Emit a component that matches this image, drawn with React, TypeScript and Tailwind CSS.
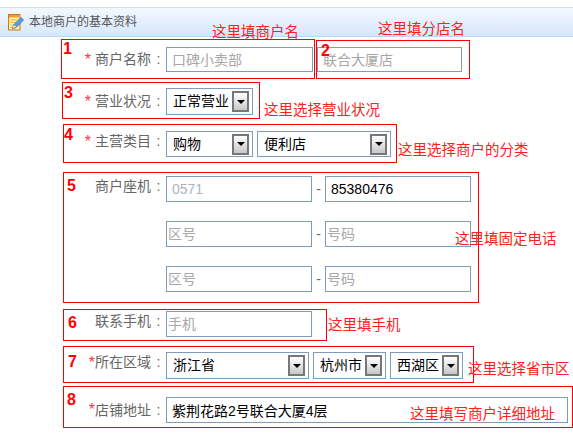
const fontStack = "font-['Liberation_Sans','Noto_Sans_CJK_SC',sans-serif]";

const boxes = [
	{ n: "1", box: "left-[61px] top-[39px] w-[254px] h-[40px]", num: "left-[63px] top-[37px]" },
	{ n: "2", box: "left-[316px] top-[40px] w-[154px] h-[39px]", num: "left-[321px] top-[39px]" },
	{ n: "3", box: "left-[62px] top-[82px] w-[198px] h-[37px]", num: "left-[64px] top-[81px]" },
	{ n: "4", box: "left-[63px] top-[124px] w-[334px] h-[39px]", num: "left-[64px] top-[123px]" },
	{ n: "5", box: "left-[63px] top-[172px] w-[416px] h-[131px] border-[#e00000]", num: "left-[67px] top-[174px]" },
	{ n: "6", box: "left-[63px] top-[309px] w-[264px] h-[32px]", num: "left-[68px] top-[311px]" },
	{ n: "7", box: "left-[63px] top-[346px] w-[411px] h-[37px]", num: "left-[68px] top-[350px]" },
	{ n: "8", box: "left-[63px] top-[386px] w-[510px] h-[42px]", num: "left-[67px] top-[388px]" },
];

const notes = [
	{ text: "这里填商户名", pos: "left-[212px] top-[22px]" },
	{ text: "这里填分店名", pos: "left-[378px] top-[19px]" },
	{ text: "这里选择营业状况", pos: "left-[264px] top-[100px]" },
	{ text: "这里选择商户的分类", pos: "left-[398px] top-[140px]" },
	{ text: "这里填固定电话", pos: "left-[455px] top-[229px]" },
	{ text: "这里填手机", pos: "left-[328px] top-[315px]" },
	{ text: "这里选择省市区", pos: "left-[468px] top-[359px]" },
	{ text: "这里填写商户详细地址", pos: "left-[410px] top-[404px]" },
];

function NoteIcon() {
	return (
		<svg width="16" height="17" viewBox="0 0 16 17" className="shrink-0">
			<rect x="0.5" y="0.5" width="11.5" height="15.5" fill="#fff3b0" stroke="#d9731a" />
			<rect x="1" y="1" width="10.5" height="2.5" fill="#f0a030" />
			<path d="M2.5 6h7M2.5 8.5h5.5M2.5 11h4M2.5 13.5h3" stroke="#e8b830" strokeWidth="1.2" />
			<path d="M4.5 15l1.2-4 7.3-7.5 2.5 2.5-7.3 7.5z" fill="#5aa0e0" stroke="#2c6cb0" strokeWidth="0.8" />
			<path d="M4.5 15l1.2-4 2.8 1.5z" fill="#f5d9a8" />
		</svg>
	);
}

function Label({ text, star, gap = "gap-[4px]", lift = false }: { text: string; star?: boolean; gap?: string; lift?: boolean }) {
	return (
		<div className={`w-[166px] shrink-0 flex justify-end items-center text-[14px] text-[#666] ${gap} ${lift ? "-mt-[6px]" : ""}`}>
			{star && <span className="text-[16px] text-[#ff3344] leading-none">*</span>}
			<span className="flex items-center">
				{text}
				<span className="w-[15px] text-center">:</span>
			</span>
		</div>
	);
}

function Field({ value, placeholder, width, pad = "pl-[5px]", tone = "text-black" }: { value?: string; placeholder?: string; width: string; pad?: string; tone?: string }) {
	return (
		<input
			readOnly
			value={value}
			placeholder={placeholder}
			className={`h-full border border-[#7f9db9] bg-white text-[14px] outline-none placeholder:text-[#a8a8a8] ${width} ${pad} ${tone}`}
		/>
	);
}

function Select({ text, width }: { text: string; width: string }) {
	return (
		<div className={`h-full border border-[#7f9db9] bg-white flex items-center justify-between pl-[6px] pr-[3px] text-[14px] text-black ${width}`}>
			<span>{text}</span>
			<div className="w-[17px] h-[21px] border-2 border-[#777] bg-gradient-to-b from-white to-[#c8c8c8] flex items-center justify-center">
				<div className="w-0 h-0 border-x-[4px] border-x-transparent border-t-[4px] border-t-black" />
			</div>
		</div>
	);
}

function Dash() {
	return <span className="w-[13px] text-center text-[14px] text-[#666]">-</span>;
}

export default function App() {
	return (
		<div className={`relative w-[573px] h-[437px] overflow-hidden bg-white ${fontStack}`}>
			<div className="mt-[7px] h-[30px] flex items-center gap-[5px] pl-[8px] border-y border-t-[#cfe0f7] border-b-[#bcd6f8] bg-gradient-to-b from-[#f3f8fe] to-[#d6e7fc]">
				<NoteIcon />
				<span className="text-[12px] text-[#555]">本地商户的基本资料</span>
			</div>

			<div className="mt-[10px] h-[25px] flex">
				<Label text="商户名称" star />
				<Field placeholder="口碑小卖部" width="w-[147px]" />
				<div className="ml-[4px] h-full">
					<Field placeholder="联合大厦店" width="w-[145px]" />
				</div>
			</div>

			<div className="mt-[16px] h-[27px] flex">
				<Label text="营业状况" star />
				<Select text="正常营业" width="w-[87px]" />
			</div>

			<div className="mt-[16px] h-[26px] flex gap-[4px]">
				<div className="-mr-[4px]">
					<Label text="主营类目" star />
				</div>
				<Select text="购物" width="w-[87px]" />
				<Select text="便利店" width="w-[134px]" />
			</div>

			<div className="mt-[19px] h-[26px] flex items-center">
				<Label text="商户座机" lift />
				<Field value="0571" width="w-[146px]" tone="text-[#a9b4c4]" />
				<Dash />
				<Field value="85380476" width="w-[146px]" />
			</div>

			<div className="mt-[19px] h-[26px] flex items-center">
				<div className="w-[166px] shrink-0" />
				<Field placeholder="区号" width="w-[146px]" pad="pl-[1px]" />
				<Dash />
				<Field placeholder="号码" width="w-[146px]" pad="pl-[1px]" />
			</div>

			<div className="mt-[19px] h-[26px] flex items-center">
				<div className="w-[166px] shrink-0" />
				<Field placeholder="区号" width="w-[146px]" pad="pl-[1px]" />
				<Dash />
				<Field placeholder="号码" width="w-[146px]" pad="pl-[1px]" />
			</div>

			<div className="mt-[19px] h-[26px] flex items-center">
				<Label text="联系手机" lift />
				<Field placeholder="手机" width="w-[146px]" pad="pl-[1px]" />
			</div>

			<div className="mt-[15px] h-[27px] flex gap-[4px]">
				<div className="-mr-[4px]">
					<Label text="所在区域" star gap="gap-0" />
				</div>
				<Select text="浙江省" width="w-[143px]" />
				<Select text="杭州市" width="w-[73px]" />
				<Select text="西湖区" width="w-[73px]" />
			</div>

			<div className="mt-[18px] h-[26px] flex">
				<Label text="店铺地址" star gap="gap-0" />
				<Field value="紫荆花路2号联合大厦4层" width="w-[402px]" />
			</div>

			{boxes.map((b) => (
				<div key={b.n}>
					<div className={`absolute border border-[#ff0000] pointer-events-none ${b.box}`} />
					<span className={`absolute text-[16px] font-bold text-[#ff0000] ${b.num}`}>{b.n}</span>
				</div>
			))}
			{notes.map((note) => (
				<span key={note.text} className={`absolute text-[14.5px] text-[#ff2020] whitespace-nowrap ${note.pos}`}>
					{note.text}
				</span>
			))}
		</div>
	);
}
